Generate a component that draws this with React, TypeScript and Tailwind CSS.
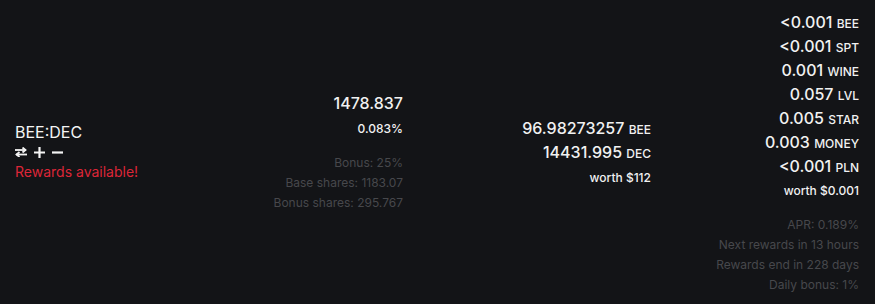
import React from "react";

const font = { fontFamily: "Inter, 'Noto Sans', sans-serif" };

function Amt({ v, s }: { v: string; s: string }) {
  return (
    <div className="leading-6 h-6 text-[16px] font-medium text-[#f1f1f1]">
      {v} <span className="text-[12px] leading-none uppercase">{s}</span>
    </div>
  );
}

function Swap() {
  return (
    <svg width="12" height="10" viewBox="0 0 12 10" fill="none" stroke="#f4f4f4" strokeWidth="1.8" strokeLinecap="square">
      <path d="M0.5 3H10" />
      <path d="M7.5 0.5L10.5 3L7.5 5.5" strokeLinecap="butt" strokeLinejoin="miter" />
      <path d="M11.5 7.5H2" />
      <path d="M4.5 5L1.5 7.5L4.5 10" strokeLinecap="butt" strokeLinejoin="miter" />
    </svg>
  );
}

export default function App() {
  const rewards = [
    ["<0.001", "bee"],
    ["<0.001", "spt"],
    ["0.001", "wine"],
    ["0.057", "lvl"],
    ["0.005", "star"],
    ["0.003", "money"],
    ["<0.001", "pln"],
  ];
  return (
    <div className="w-[875px] h-[304px] bg-[#131417] grid grid-cols-[210px_208px_248px_209px] items-center" style={font}>
      <div className="pl-[15px]">
        <div className="text-[16px] leading-5 text-[#f4f4f4]">BEE:DEC</div>
        <div className="flex items-center gap-[7px] h-5">
          <Swap />
          <svg width="11" height="11" viewBox="0 0 11 11" stroke="#f4f4f4" strokeWidth="2.2">
            <path d="M5.5 0V11M0 5.5H11" />
          </svg>
          <svg width="11" height="11" viewBox="0 0 11 11" stroke="#f4f4f4" strokeWidth="2.2">
            <path d="M0 5.5H11" />
          </svg>
        </div>
        <div className="text-[14px] leading-5 text-[#dc2638]">Rewards available!</div>
      </div>

      <div className="pr-[15px] text-right">
        <div className="leading-6 text-[16px] font-medium text-[#f1f1f1]">1478.837</div>
        <div className="mt-1 leading-5 text-[12px] font-medium text-[#f1f1f1]">0.083%</div>
        <div className="mt-[14px] text-[12px] leading-5 text-[#47484c]">
          <div>Bonus: 25%</div>
          <div>Base shares: 1183.07</div>
          <div>Bonus shares: 295.767</div>
        </div>
      </div>

      <div className="pr-[15px] text-right">
        <Amt v="96.98273257" s="bee" />
        <Amt v="14431.995" s="dec" />
        <div className="mt-1 leading-5 text-[12px] font-medium text-[#f1f1f1]">worth $112</div>
      </div>

      <div className="pr-[16px] text-right">
        {rewards.map(([v, s]) => (
          <Amt key={s} v={v} s={s} />
        ))}
        <div className="mt-[3px] leading-5 text-[12px] font-medium text-[#f1f1f1]">worth $0.001</div>
        <div className="mt-[14px] text-[12px] leading-5 text-[#47484c]">
          <div>APR: 0.189%</div>
          <div>Next rewards in 13 hours</div>
          <div>Rewards end in 228 days</div>
          <div>Daily bonus: 1%</div>
        </div>
      </div>
    </div>
  );
}
